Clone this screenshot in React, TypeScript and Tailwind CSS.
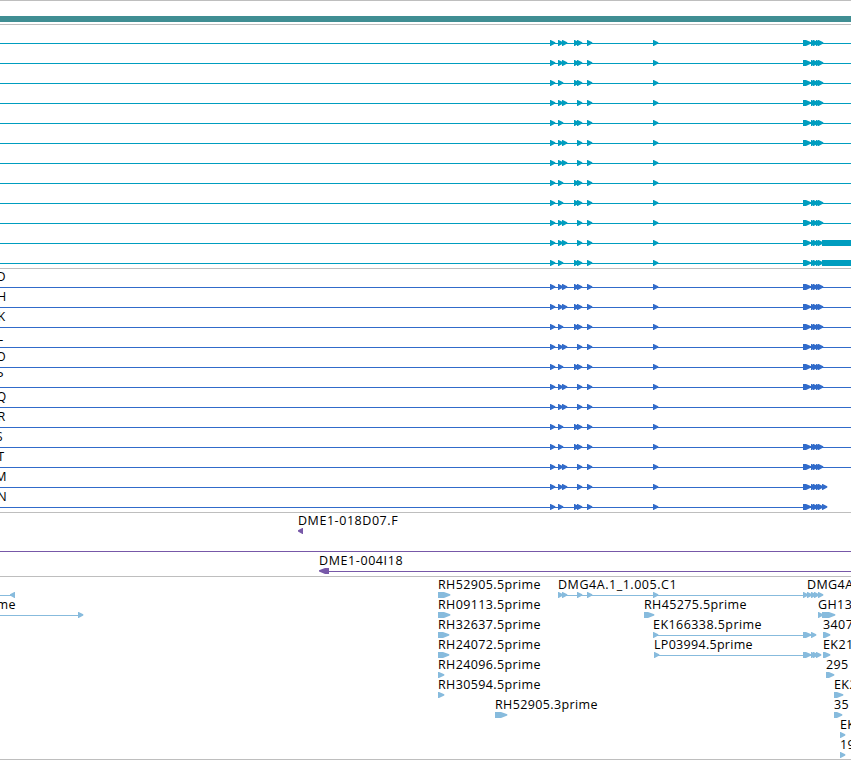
type Glyph = { x: number; w?: number; left?: boolean };
type Line = [number, number];
type Label = { x: number; text: string; width?: number; end?: boolean };
type Row = { labels?: Label[]; lines?: Line[]; glyphs?: Glyph[]; bar?: Line };

const WIDTH = 851;

// exons shared by every transcript of the gene
const exons = (variant: string): Glyph[] => {
    const middle: Record<string, number[]> = {
        a: [558, 562, 574, 577],
        b: [558, 574, 577],
        c: [558, 562, 577],
    };
    return [550, ...middle[variant], 587, 653].map((x) => ({ x }));
};

const tail: Glyph[] = [{ x: 803, w: 8 }, { x: 811 }, { x: 813 }, { x: 816 }, { x: 818 }];
const variants = ["a", "a", "b", "c", "b", "c", "c", "b", "b", "c", "c", "b"];

const geneRows: Row[] = variants.map((v, i) => ({
    lines: [[0, WIDTH]],
    glyphs: i === 6 || i === 7 ? exons(v) : [...exons(v), ...tail],
    bar: i > 9 ? [822, WIDTH] : undefined,
}));

const names: [string, number][] = [
    ["D", 6], ["H", 6.5], ["K", 5.5], ["L", 3.5], ["O", 6], ["P", 4],
    ["Q", 6.5], ["R", 5.5], ["S", 3], ["T", 4.5], ["M", 7], ["N", 7],
];

const cdsRows: Row[] = variants.map((v, i) => ({
    labels: [{ x: names[i][1], text: names[i][0], end: true }],
    lines: [[0, i > 9 ? 823 : WIDTH]],
    glyphs: i === 6 || i === 7 ? exons(v) : [...exons(v), ...tail, ...(i > 9 ? [{ x: 822 }] : [])],
}));

const bacRows: Row[] = [
    { labels: [{ x: 298, text: "DME1-018D07.F", width: 100 }], glyphs: [{ x: 298, left: true }] },
    { lines: [[0, WIDTH]] },
    {
        labels: [{ x: 319, text: "DME1-004I18", width: 84 }],
        lines: [[328, WIDTH]],
        glyphs: [{ x: 319, w: 10, left: true }],
    },
];

const estRows: Row[] = [
    {
        labels: [
            { x: 438, text: "RH52905.5prime", width: 103 },
            { x: 558, text: "DMG4A.1_1.005.C1", width: 119 },
            { x: 807, text: "DMG4A.2_1" },
        ],
        lines: [[0, 11], [560, 820]],
        glyphs: [
            { x: 10, left: true }, { x: 438, w: 12 }, { x: 558 }, { x: 562 }, { x: 577 }, { x: 587 }, { x: 653 },
            { x: 803 }, { x: 807 }, { x: 811 }, { x: 814 }, { x: 818 },
        ],
    },
    {
        labels: [
            { x: 16, text: "prime", end: true },
            { x: 438, text: "RH09113.5prime", width: 103 },
            { x: 644, text: "RH45275.5prime", width: 103 },
            { x: 818, text: "GH13720" },
        ],
        lines: [[0, 79]],
        glyphs: [{ x: 78 }, { x: 438, w: 12 }, { x: 644, w: 10 }, { x: 818 }, { x: 822, w: 13 }],
    },
    {
        labels: [
            { x: 438, text: "RH32637.5prime", width: 103 },
            { x: 653, text: "EK166338.5prime", width: 109 },
            { x: 823, text: "34070" },
        ],
        lines: [[653, 813]],
        glyphs: [{ x: 438, w: 11 }, { x: 653 }, { x: 803, w: 8 }, { x: 811 }, { x: 823, w: 7 }],
    },
    {
        labels: [
            { x: 438, text: "RH24072.5prime", width: 103 },
            { x: 654, text: "LP03994.5prime", width: 99 },
            { x: 823, text: "EK213" },
        ],
        lines: [[654, 813]],
        glyphs: [{ x: 438, w: 11 }, { x: 654 }, { x: 803, w: 8 }, { x: 811 }, { x: 813 }, { x: 816 }, { x: 823, w: 7 }],
    },
    {
        labels: [{ x: 438, text: "RH24096.5prime", width: 103 }, { x: 826, text: "295" }],
        glyphs: [{ x: 438, w: 6 }, { x: 826, w: 8 }],
    },
    {
        labels: [{ x: 438, text: "RH30594.5prime", width: 103 }, { x: 834, text: "EK2" }],
        glyphs: [{ x: 438, w: 6 }, { x: 834, w: 9 }],
    },
    {
        labels: [{ x: 495, text: "RH52905.3prime", width: 103 }, { x: 834, text: "35" }],
        glyphs: [{ x: 495, w: 12 }, { x: 834, w: 8 }],
    },
    { labels: [{ x: 840, text: "EK" }], glyphs: [{ x: 840 }] },
    { labels: [{ x: 840, text: "19" }], glyphs: [{ x: 840 }] },
];

// block with a pointed end; short ones are a plain triangle
function glyphPath({ x, w = 5, left }: Glyph) {
    const body = w > 8 ? w - 6 : w > 5 ? w - 5 : 0.6;
    if (left) {
        const r = x + w;
        return `M${r} 12H${r - body}L${x} 14.3V15.4L${r - body} 18H${r}Z`;
    }
    return `M${x} 12H${x + body}L${x + w + 0.3} 14.3V15.4L${x + body} 18H${x}Z`;
}

function TrackRow({ row }: { row: Row }) {
    return (
        <svg width={WIDTH} height={20} className="block shrink-0 overflow-hidden">
            <g fill="currentColor">
                {row.lines?.map(([from, to]) => (
                    <rect key={from} x={from} y={15} width={to - from} height={1} />
                ))}
                {row.glyphs?.map((g) => <path key={g.x} d={glyphPath(g)} />)}
                {row.bar && <rect x={row.bar[0]} y={12} width={row.bar[1] - row.bar[0]} height={6} />}
            </g>
            {row.labels?.map((l) => (
                <text
                    key={l.x}
                    x={l.x}
                    y={9}
                    textAnchor={l.end ? "end" : "start"}
                    textLength={l.width}
                    className="fill-black text-[12.5px] tracking-[0.4px]"
                >
                    {l.text}
                </text>
            ))}
        </svg>
    );
}

function Track({ rows, className }: { rows: Row[]; className: string }) {
    return (
        <section className={`flex flex-col overflow-hidden border-t border-[#bebebe] pt-[3px] ${className}`}>
            {rows.map((row, i) => <TrackRow key={i} row={row} />)}
        </section>
    );
}

export default function App() {
    return (
        <main className="flex h-[760px] w-[851px] flex-col overflow-hidden bg-white font-['Open_Sans','Noto_Sans',sans-serif]">
            <div className="h-6 shrink-0 border-t border-[#bebebe] pt-[15px]">
                <div className="h-1.5 bg-[#408e93]" />
            </div>
            <Track rows={geneRows} className="h-[244px] shrink-0 text-[#009dbf]" />
            <Track rows={cdsRows} className="h-[244px] shrink-0 text-[#316bca]" />
            <Track rows={bacRows} className="h-16 shrink-0 text-[#7758a8]" />
            <Track rows={estRows} className="h-[183px] shrink-0 text-[#87bbdd]" />
            <div className="h-px shrink-0 bg-[#bebebe]" />
        </main>
    );
}
